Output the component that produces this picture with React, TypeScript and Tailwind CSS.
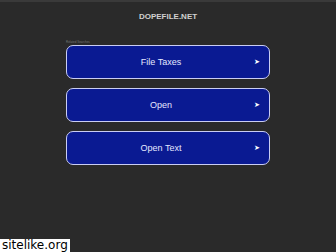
import React from 'react';

const links = ['File Taxes', 'Open', 'Open Text'];

const LinkButton: React.FC<{ label: string }> = ({ label }) => (
  <a
    href="#"
    className="flex items-center h-[34px] rounded-[7px] border border-[#c9cdf3] bg-[#0a1a92] text-[#e4e8ff] no-underline"
  >
    <span className="flex-1 text-center text-[9px] pl-[10px] pt-[2px]">{label}</span>
    <span className="w-[24px] flex justify-center text-white text-[7px] pt-[1px]">➤</span>
  </a>
);

export default function App() {
  return (
    <div
      className="relative w-[336px] h-[252px] overflow-hidden bg-[#2a2a2a]"
      style={{ fontFamily: '"Liberation Sans", Arial, sans-serif' }}
    >
      <div className="h-[2px] bg-[#3a3a3a]" />
      {/* Header */}
      <div className="pt-[10px] text-center text-[8px] font-bold text-[#d0d0d0] leading-[10px]">
        DOPEFILE.NET
      </div>

      <div className="mx-auto w-[204px] mt-[19px]">
        <div className="h-[4px] text-[3px] leading-[3px] text-[#777]">Related Searches</div>
        <div className="flex flex-col gap-[9px]">
          {links.map(l => <LinkButton key={l} label={l} />)}
        </div>
      </div>

      {/* watermark */}
      <div
        className="absolute left-0 bottom-0 h-[13px] bg-white text-black text-[12px] leading-[13px] px-[2px]"
        style={{ fontFamily: '"DejaVu Sans", Verdana, sans-serif' }}
      >
        sitelike.org
      </div>
    </div>
  );
}
